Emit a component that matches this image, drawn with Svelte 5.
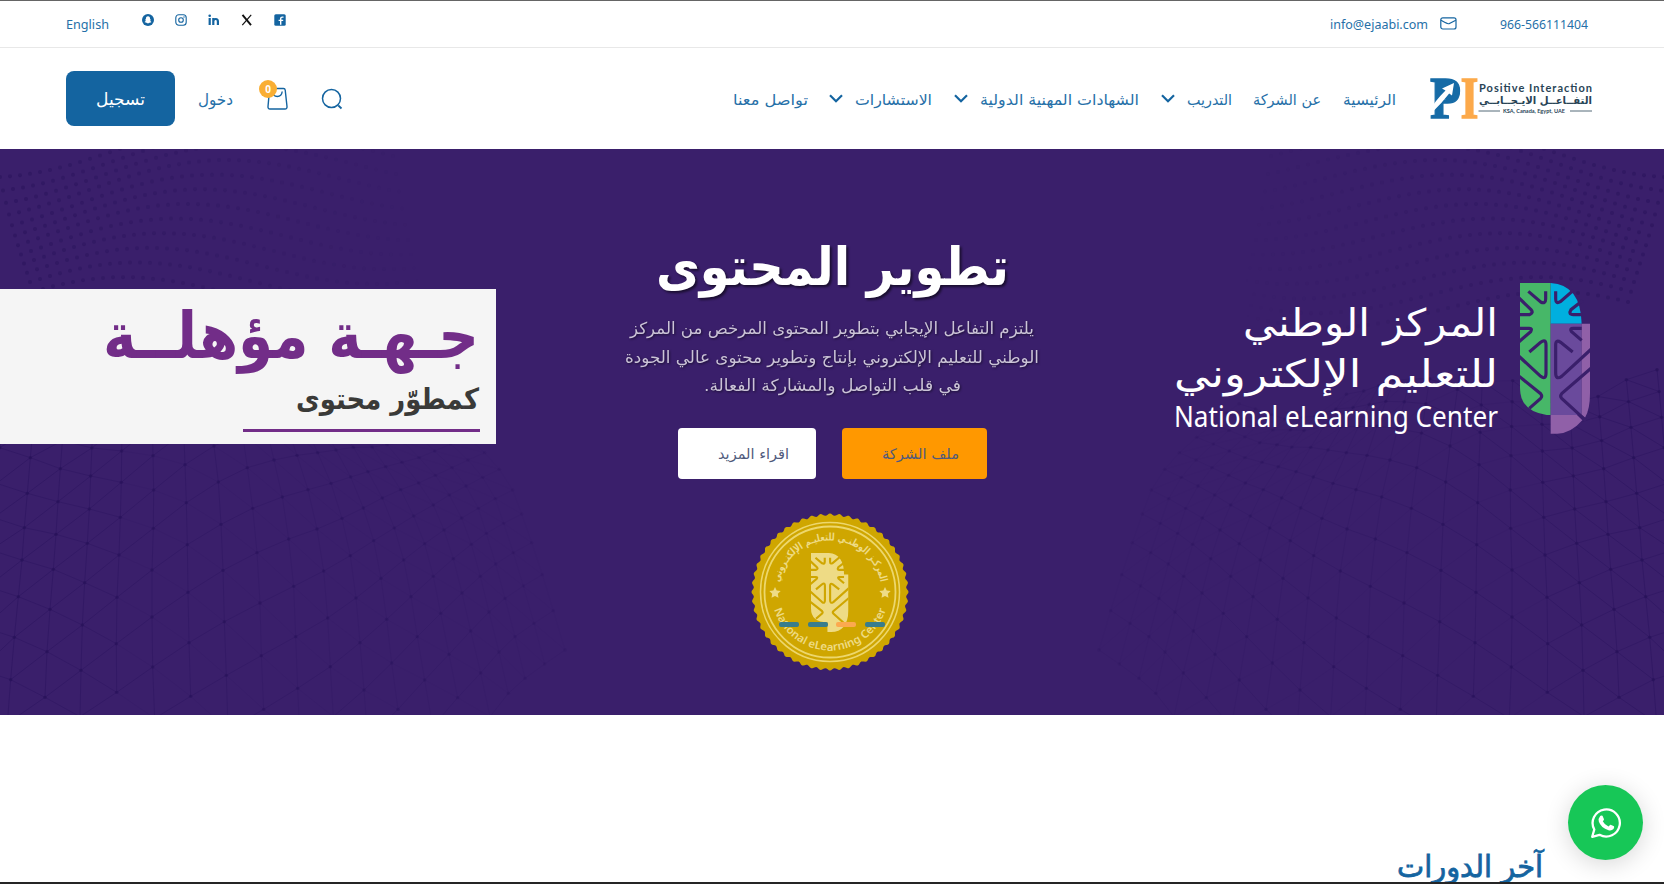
<script>
  const nav = [
    { label: 'تواصل معنا', w: 75, gap: 0 },
    { label: 'الاستشارات', w: 77, gap: 21, arrow: true },
    { label: 'الشهادات المهنية الدولية', w: 159, gap: 22, arrow: true },
    { label: 'التدريب', w: 45, gap: 22, arrow: true },
    { label: 'عن الشركة', w: 68, gap: 21 },
    { label: 'الرئيسية', w: 53, gap: 22 }
  ];

  // Wire mesh for the hero corners: [row of the first node, x, y, x, y, ...] per column
  const columns = [
    [-4, -1, 23, -10, 130, -19, 233, -28, 330, -37, 440, -49, 562, -60, 689],
    [-3, 91, 53, 82, 160, 73, 263, 66, 360, 55, 470, 43, 592, 32, 719, 22, 850],
    [-2, 181, 86, 174, 185, 168, 283, 160, 388, 150, 508, 141, 635, 135, 772],
    [-1, 272, 108, 268, 207, 262, 310, 254, 428, 247, 555, 243, 691, 240, 830],
    [-1, 365, 33, 364, 127, 361, 232, 357, 345, 351, 472, 349, 611, 350, 757],
    [0, 459, 47, 461, 150, 460, 265, 456, 390, 456, 531, 458, 681, 464, 835],
    [1, 555, 74, 559, 188, 562, 314, 564, 457, 567, 608, 572, 769],
    [1, 642, 18, 655, 126, 663, 253, 669, 391, 673, 545, 679, 706, 684, 870],
    [2, 742, 83, 758, 205, 771, 338, 780, 489, 784, 647, 791, 808],
    [2, 822, 60, 847, 171, 866, 297, 881, 439, 887, 590, 893, 745, 900, 900],
    [2, 891, 46, 924, 149, 951, 267, 971, 393, 983, 534, 991, 680, 1000, 830],
    [2, 953, 38, 993, 130, 1026, 235, 1051, 347, 1068, 474, 1080, 608, 1092, 750, 1103, 895],
    [2, 1008, 30, 1052, 111, 1090, 204, 1121, 302, 1143, 415, 1160, 538, 1175, 669, 1194, 808],
    [2, 1060, 22, 1104, 95, 1147, 174, 1183, 264, 1211, 360, 1233, 470, 1252, 590, 1274, 720, 1298, 860],
    [3, 1157, 80, 1202, 149, 1241, 228, 1274, 311, 1300, 409, 1322, 520, 1347, 643, 1373, 773],
    [3, 1206, 67, 1256, 129, 1300, 195, 1332, 270, 1360, 356, 1386, 459, 1412, 573, 1442, 699, 1470, 830],
    [3, 1257, 53, 1306, 106, 1348, 165, 1385, 234, 1414, 313, 1441, 409, 1467, 516, 1497, 636, 1525, 760],
    [3, 1304, 33, 1356, 83, 1398, 138, 1435, 205, 1459, 280, 1487, 372, 1515, 475, 1545, 590, 1575, 715],
    [3, 1352, 12, 1404, 60, 1448, 112, 1486, 176, 1511, 250, 1540, 338, 1570, 438, 1602, 550, 1634, 672],
    [3, 1402, -8, 1454, 38, 1498, 88, 1538, 150, 1565, 222, 1595, 308, 1627, 404, 1660, 512, 1695, 630]
  ];

  function mesh() {
    const node = {};
    columns.forEach((col, c) => {
      const r0 = col[0];
      for (let k = 1, r = r0; k < col.length; k += 2, r++) node[`${c},${r}`] = [col[k] / 3, col[k + 1] / 3 + 291];
      for (let n = 1; n <= 3; n++) {
        const a = node[`${c},${r0 - n + 1}`], b = node[`${c},${r0 - n + 2}`];
        node[`${c},${r0 - n}`] = [a[0] - (b[0] - a[0]) * 0.9, a[1] - (b[1] - a[1]) * 0.85];
      }
    });
    const lines = [];
    const dots = [];
    for (const key in node) {
      const [c, r] = key.split(',').map(Number);
      const a = node[key];
      const o = Math.max(0.08, 1 - c / 24);
      dots.push({ x: a[0], y: a[1], r: 1.7, o: o * 0.65 });
      const link = (k, w) => { if (node[k]) lines.push({ d: `M${a}L${node[k]}`, o: o * w }); };
      link(`${c},${r + 1}`, c < 8 ? 0.5 : 0.35);
      link(`${c + 1},${r}`, 0.45);
      link(`${c + 1},${r + 1}`, c < 4 ? 0.4 : 0.16);
    }
    for (let r = 0; r < 13; r++) {
      for (let k = 0; k < 40; k++) {
        const x = k * 10 + r * 3;
        const y = 4 + r * 14 + 24 * Math.cos(x / 80 + r * 0.16) - x * 0.05;
        dots.push({ x, y, r: 2, o: Math.max(0, 0.45 * (1 - x / 420)) });
      }
    }
    return { lines, dots };
  }
  const m = mesh();

  function scallop(cx, cy, r, n) {
    let d = '';
    for (let i = 0; i <= n * 8; i++) {
      const a = (i / (n * 8)) * Math.PI * 2;
      const rr = r + Math.cos(a * n) * 1.1;
      d += (i ? 'L' : 'M') + (cx + rr * Math.cos(a)).toFixed(2) + ' ' + (cy + rr * Math.sin(a)).toFixed(2);
    }
    return d + 'Z';
  }
  const sealEdge = scallop(79, 79, 77.4, 52);
  const cuts = [
    'M1135 95L1172 127Q1187 134 1187 118V95',
    'M1217 95V118Q1217 134 1231 126L1270 92',
    'M1106 114L1143 150Q1152 160 1138 165H1110',
    'M1299 122L1263 150Q1254 165 1270 165H1297',
    'M1108 206H1138Q1148 206 1142 216L1106 247',
    'M1295 206H1270Q1258 206 1264 215L1295 242',
    'M1138 277L1172 248Q1188 236 1188 256V340Q1188 362 1172 350L1106 289',
    'M1268 277L1232 248Q1217 238 1217 256V340Q1217 362 1235 350L1324 268',
    'M1106 349L1172 402Q1178 409 1172 416L1138 446',
    'M1324 325L1235 402Q1229 409 1235 416L1308 483'
  ];
</script>

{#snippet ar(text, w, h, base, size, cls)}
  <svg class="t {cls}" width={w} height={h}><text direction="rtl" x={w} y={base} font-size={size} textLength={w} lengthAdjust="spacingAndGlyphs">{text}</text></svg>
{/snippet}

{#snippet en(text, w, h, base, size, cls)}
  <svg class="t {cls}" width={w} height={h}><text x="0" y={base} font-size={size} textLength={w} lengthAdjust="spacingAndGlyphs">{text}</text></svg>
{/snippet}

<div class="page">
  <div class="topbar">
    {@render en('English', 43, 46, 28, 13, 'latin blue')}
    <div class="social">
      <svg width="12" height="12" viewBox="0 0 12 12"><circle cx="6" cy="6" r="6" fill="#1464a0" /><path d="M6 2.200c1.500 0 2.200 1 2.100 3l.9 .5-.8.8c.3.8.8 1.100 1.300 1.400-.5.5-1.200.4-1.500.9-.7-.2-1.200.6-2 .6s-1.300-.8-2-.6c-.3-.5-1-.4-1.500-.9.5-.3 1-.6 1.300-1.400l-.8-.8.9-.5c-.1-2 .6-3 2.100-3z" fill="#fff" /></svg>
      <svg width="12" height="12" viewBox="0 0 12 12" fill="none" stroke="#1464a0"><rect x=".8" y=".8" width="10.400" height="10.400" rx="3" stroke-width="1.100" /><circle cx="6" cy="6" r="2.300" stroke-width="1.100" /><circle cx="9" cy="3" r=".7" fill="#1464a0" stroke="none" /></svg>
      <svg width="12" height="12" viewBox="0 0 12 12" fill="none" stroke="#1464a0" stroke-width="2.200"><path d="M1.700 4v7M5.300 11V4M5.300 7.500Q5.500 5 7.700 5Q9.900 5 9.900 7.500V11" /><circle cx="1.700" cy="1.700" r="1.300" fill="#1464a0" stroke="none" /></svg>
      <svg width="12" height="12" viewBox="0 0 12 12" fill="none" stroke="#111"><path d="M1.500 .8L10 11.200" stroke-width="1.900" /><path d="M10.200 .8L1.300 11.200" stroke-width="1.200" /></svg>
      <svg width="12" height="12" viewBox="0 0 12 12"><rect x=".3" y=".3" width="11.400" height="11.400" rx="1.500" fill="#1464a0" /><path d="M9.500 3.100H8.300Q6.700 3.100 6.700 4.600V10.700M4.600 6.400H9.200" fill="none" stroke="#fff" stroke-width="1.400" /></svg>
    </div>
    <div class="contact">
      {@render en('info@ejaabi.com', 98, 46, 28, 13, 'latin blue')}
      <svg class="mail" width="17" height="13" viewBox="0 0 17 13" fill="none" stroke="#1464a0" stroke-width="1.200"><rect x=".8" y=".8" width="15.200" height="11.200" rx="2" /><path d="M1 3.200Q6 6 7.500 6.500T9.500 6.400L15.800 3.200" /></svg>
      {@render en('966-566111404', 88, 46, 28, 13, 'latin blue')}
    </div>
  </div>

  <header>
    <button class="register">{@render ar('تسجيل', 49, 55, 34, 17, 'white')}</button>
    <span class="login">{@render ar('دخول', 35, 55, 34, 16, 'blue')}</span>
    <div class="cart">
      <svg width="23" height="24" viewBox="0 0 23 24" fill="none" stroke="#1464a0" stroke-width="1.400"><path d="M4.500 1.500H17.500Q19 1.500 19.200 3L21 19.500Q21.200 22 19 22H4Q1.800 22 2 19.500L3.500 3Q3.700 1.500 4.500 1.500Z" /><path d="M6.500 4.500Q7 9.500 11.300 9.500T16.200 4.500" /></svg>
      <span class="count">0</span>
    </div>
    <svg class="search" width="22" height="22" viewBox="0 0 22 22" fill="none" stroke="#1464a0" stroke-width="1.500"><circle cx="10.500" cy="10.500" r="9" /><path d="M17.300 17.500L20.500 20.500" stroke-width="1.800" /></svg>
    <nav>
      {#each nav as n}
        <span class="item" style="margin-left: {n.gap}px">
          {#if n.arrow}<svg width="14" height="9" viewBox="0 0 14 9" fill="none" stroke="#1464a0" stroke-width="2.200"><path d="M1 1.200L7 7.200L13 1.200" /></svg>{/if}
          {@render ar(n.label, n.w, 55, 34, 15, 'blue')}
        </span>
      {/each}
    </nav>
    <svg class="brand" width="165" height="43" viewBox="0 0 165 43">
      <g class="serif" font-size="59"><text x="1" y="41" textLength="31" lengthAdjust="spacingAndGlyphs" fill="#166ba6" stroke="#166ba6" stroke-width="1.300">P</text><text x="31.500" y="41" textLength="18" lengthAdjust="spacingAndGlyphs" fill="#fca94a" stroke="#fca94a" stroke-width="1.300">I</text></g>
      <path d="M13 4H22Q27 12 22 22H13Z" fill="#166ba6" />
      <path d="M1 33Q6 24 16.500 13.500L13 11.500L25 6L23 18.500L20.200 16.500Q12 27 4 34.500L1 36Z" fill="#fff" />
      <g fill="#294456">
        <text class="lato" x="50" y="14.500" font-size="11" textLength="113" lengthAdjust="spacing">Positive Interaction</text>
        <text class="arb" direction="rtl" x="163" y="26.500" font-size="10.500" textLength="113" lengthAdjust="spacingAndGlyphs">التفــاعــل الايـجــابــي</text>
        <text class="lato" x="74" y="36" font-size="4.800" textLength="62" lengthAdjust="spacingAndGlyphs">KSA, Canada, Egypt, UAE</text>
      </g>
      <path d="M49.500 34H71M141 34H163" stroke="#294456" stroke-width=".8" />
    </svg>
  </header>

  <section class="hero">
    <svg class="backdrop" width="1664" height="566">
      {#each [0, 1] as side}
        <g transform={side ? 'translate(1664 0) scale(-1 1)' : null}>
          {#each m.lines as l}<path d={l.d} stroke="#29125d" stroke-width="1" opacity={l.o} />{/each}
          {#each m.dots as p}<circle cx={p.x} cy={p.y} r={p.r} fill="#261158" opacity={p.o} />{/each}
        </g>
      {/each}
    </svg>

    <div class="qualified">
      {@render ar('جـهـة مؤهلــة', 376, 84, 69, 64, 'violet')}
      {@render ar('كمطوّر محتوى', 183, 47, 36, 29, 'dark')}
      <div class="rule"></div>
    </div>

    <div class="center">
      {@render ar('تطوير المحتوى', 353, 74, 58, 53, 'heading')}
      <div class="para">
        {@render ar('يلتزم التفاعل الإيجابي بتطوير المحتوى المرخص من المركز', 404, 28.5, 20, 16.5, 'pale')}
        {@render ar('الوطني للتعليم الإلكتروني بإنتاج وتطوير محتوى عالي الجودة', 414, 28.5, 20, 16.5, 'pale')}
        {@render ar('في قلب التواصل والمشاركة الفعالة.', 257, 28.5, 20, 16.5, 'pale')}
      </div>
      <div class="actions">
        <button class="more">{@render ar('اقراء المزيد', 71, 51, 31, 14.5, 'ink')}</button>
        <button class="profile">{@render ar('ملف الشركة', 77, 51, 31, 14.5, 'ink')}</button>
      </div>
      <div class="sealbox">
        <svg width="158" height="158" viewBox="0 0 158 158">
          <path d={sealEdge} fill="#cfa600" />
          <circle cx="79" cy="79" r="69.500" fill="none" stroke="#edd76c" stroke-width="1.500" />
          <circle cx="79" cy="79" r="65.500" fill="none" stroke="#edd76c" stroke-width="1.800" />
          <defs>
            <path id="arcTop" d="M27.500 79A51.500 51.500 0 0 1 130.500 79" />
            <path id="arcBottom" d="M20.500 79A58.500 58.500 0 0 0 137.500 79" />
          </defs>
          <g fill="#eedb85" text-anchor="middle">
            <text class="arb" font-size="10.500"><textPath href="#arcTop" startOffset="50%" textLength="142" lengthAdjust="spacingAndGlyphs">المركـز الوطنـي للتعليـم الإلكتـروني</textPath></text>
            <text class="lat" font-size="11" font-weight="600"><textPath href="#arcBottom" startOffset="50%" textLength="148" lengthAdjust="spacingAndGlyphs">National eLearning Center</textPath></text>
            <path d="M24 74L25.700 77.600L29.700 78.100L26.800 80.800L27.500 84.800L24 82.900L20.500 84.800L21.200 80.800L18.300 78.100L22.300 77.600Z" />
            <path d="M134 74L135.700 77.600L139.700 78.100L136.800 80.800L137.500 84.800L134 82.900L130.500 84.800L131.200 80.800L128.300 78.100L132.300 77.600Z" />
          </g>
          <svg x="60" y="40" width="37.500" height="79" viewBox="1110 68 210 454" preserveAspectRatio="none">
            <path d="M1110 68H1210Q1295 75 1295 192H1320V400Q1315 522 1222 522H1202V466Q1110 466 1110 385Z" fill="#eedb85" />
            {#each cuts as c}<path d={c} fill="none" stroke="#cfa600" stroke-width="12" />{/each}
          </svg>
        </svg>
        <div class="pager"><i></i><i></i><i class="on"></i><i></i></div>
      </div>
    </div>

    <div class="nelc">
      <div class="nelc-text">
        {@render ar('المركز الوطني', 255, 52, 37, 38, 'white')}
        {@render ar('للتعليم الإلكتروني', 324, 46, 36, 38, 'white')}
        {@render en('National eLearning Center', 324, 40, 30, 29, 'latin white')}
      </div>
      <svg width="70" height="152" viewBox="1110 68 210 454">
        <path d="M1110 70H1202V466H1190Q1110 455 1110 385Z" fill="#47b768" />
        <path d="M1202 70Q1292 75 1295 192H1202Z" fill="#00afdf" />
        <path d="M1202 192H1295V466H1202Z" fill="#6a4a9c" />
        <path d="M1295 192H1320V400Q1320 450 1305 474L1295 466ZM1202 466H1281L1297 482Q1262 522 1222 522H1202Z" fill="#9060a8" />
        {#each cuts as c}<path d={c} fill="none" stroke="#3a1f6b" stroke-width="9.500" />{/each}
      </svg>
    </div>
  </section>

  <section class="courses">
    {@render ar('آخر الدورات', 146, 60, 43, 30, 'title')}
  </section>

  <div class="whatsapp">
    <svg width="32" height="32" viewBox="0 0 32 32"><path d="M2.200 29.800L4.300 22.500A13.600 13.600 0 1 1 9.500 27.800Z" fill="none" stroke="#fff" stroke-width="2.300" stroke-linejoin="round" /><path d="M10.200 9Q11 8 12.500 8.800L14 12.200Q14 13 12.800 14.300Q14.600 18 18.500 19.600L20.300 17.700Q21 17.500 24 19.200Q24.600 20 23.500 22Q21.500 24 18.500 23.200Q11 21 8.800 14.500Q8 11.500 10.200 9Z" fill="#fff" /></svg>
  </div>
</div>

<style>
  :global(body) { margin: 0; background: #fff; }
  .page { width: 1664px; height: 884px; box-sizing: border-box; border-top: 1px solid #656565; border-bottom: 2px solid #252525; position: relative; overflow: hidden; display: flex; flex-direction: column; background: #fff; }
  svg { display: block; flex: none; }
  .t, .brand { overflow: visible; }
  .t text, .arb { font-family: "DejaVu Sans", sans-serif; }
  .latin text, .lat { font-family: "Noto Sans", sans-serif; }
  .lato { font-family: Lato, sans-serif; font-weight: 700; }
  .serif { font-family: "Liberation Serif", serif; font-weight: 700; }
  .arb { font-weight: 700; }
  .blue { fill: #2670a8; }
  .white { fill: #fff; }
  .violet { fill: #722d88; font-weight: 700; }
  .dark { fill: #3a3a38; font-weight: 700; }
  .pale { fill: #cbc4d7; filter: drop-shadow(1px 1px 1px rgba(0, 0, 0, .5)); }
  .heading { fill: #fff; font-weight: 700; filter: drop-shadow(2px 2px 1px rgba(0, 0, 0, .55)); }
  .ink { fill: #505a7c; }
  .title { fill: #1464a0; stroke: #1464a0; stroke-width: .8; }

  .topbar { height: 46px; flex: none; border-bottom: 1px solid #e8e8e8; display: flex; padding: 0 76px 0 66px; }
  .social { display: flex; gap: 21px; margin: 13px 0 0 33px; }
  .contact { display: flex; margin-left: auto; }
  .mail { margin: 16px 43px 0 12px; }

  header { height: 101px; flex: none; display: flex; align-items: center; padding: 0 70px 0 66px; }
  button { border: 0; padding: 0; display: flex; }
  .register { width: 109px; height: 55px; border-radius: 8px; background: #1464a0; justify-content: center; }
  .login { margin-left: 23px; }
  .cart { position: relative; margin-left: 33px; }
  .count { position: absolute; left: -7px; top: -7px; width: 18px; height: 18px; border-radius: 50%; background: #f9ae34; color: #fff; font: 700 10px/18px "Noto Sans", sans-serif; text-align: center; }
  .search { margin-left: 32px; }
  nav { display: flex; margin-left: auto; }
  .item { display: flex; align-items: center; gap: 12px; }
  .brand { margin: -1px 0 0 33px; }

  .hero { height: 566px; flex: none; position: relative; background: #3a1f6b; display: grid; grid-template-columns: 496px 1fr 496px; }
  .backdrop { position: absolute; inset: 0; }
  .hero > div { position: relative; }
  .qualified { margin-top: 140px; height: 155px; background: #f5f5f5; display: flex; flex-direction: column; align-items: flex-end; padding-right: 17px; box-sizing: border-box; }
  .rule { width: 237px; height: 3px; margin: 9px -1px 0 0; background: #722d88; }
  .center { display: flex; flex-direction: column; align-items: center; padding-top: 78px; }
  .para { display: flex; flex-direction: column; align-items: center; margin-top: 13px; }
  .actions { display: flex; gap: 26px; margin-top: 28.5px; }
  .actions button { height: 51px; border-radius: 4px; box-sizing: border-box; }
  .more { width: 138px; background: #fff; padding-left: 40px; }
  .profile { width: 145px; background: #ff9800; padding-left: 40px; }
  .sealbox { position: relative; margin: 34px 4px 0 0; }
  .pager { position: absolute; left: 28px; top: 109px; display: flex; gap: 8.500px; }
  .pager i { width: 20px; height: 5px; border-radius: 2px; background: #387d8d; }
  .pager .on { background: #fca94f; }
  .nelc { display: flex; margin: 133px 74px 0 auto; gap: 22px; align-items: flex-start; }
  .nelc-text { display: flex; flex-direction: column; align-items: flex-end; padding-top: 17px; }

  .courses { flex: 1; display: flex; justify-content: flex-end; padding: 119px 121px 0 0; }
  .whatsapp { position: absolute; left: 1568px; top: 784px; width: 75px; height: 75px; border-radius: 50%; background: #17c757; display: flex; align-items: center; justify-content: center; box-shadow: 0 4px 24px rgba(0, 0, 0, .16); }
</style>
